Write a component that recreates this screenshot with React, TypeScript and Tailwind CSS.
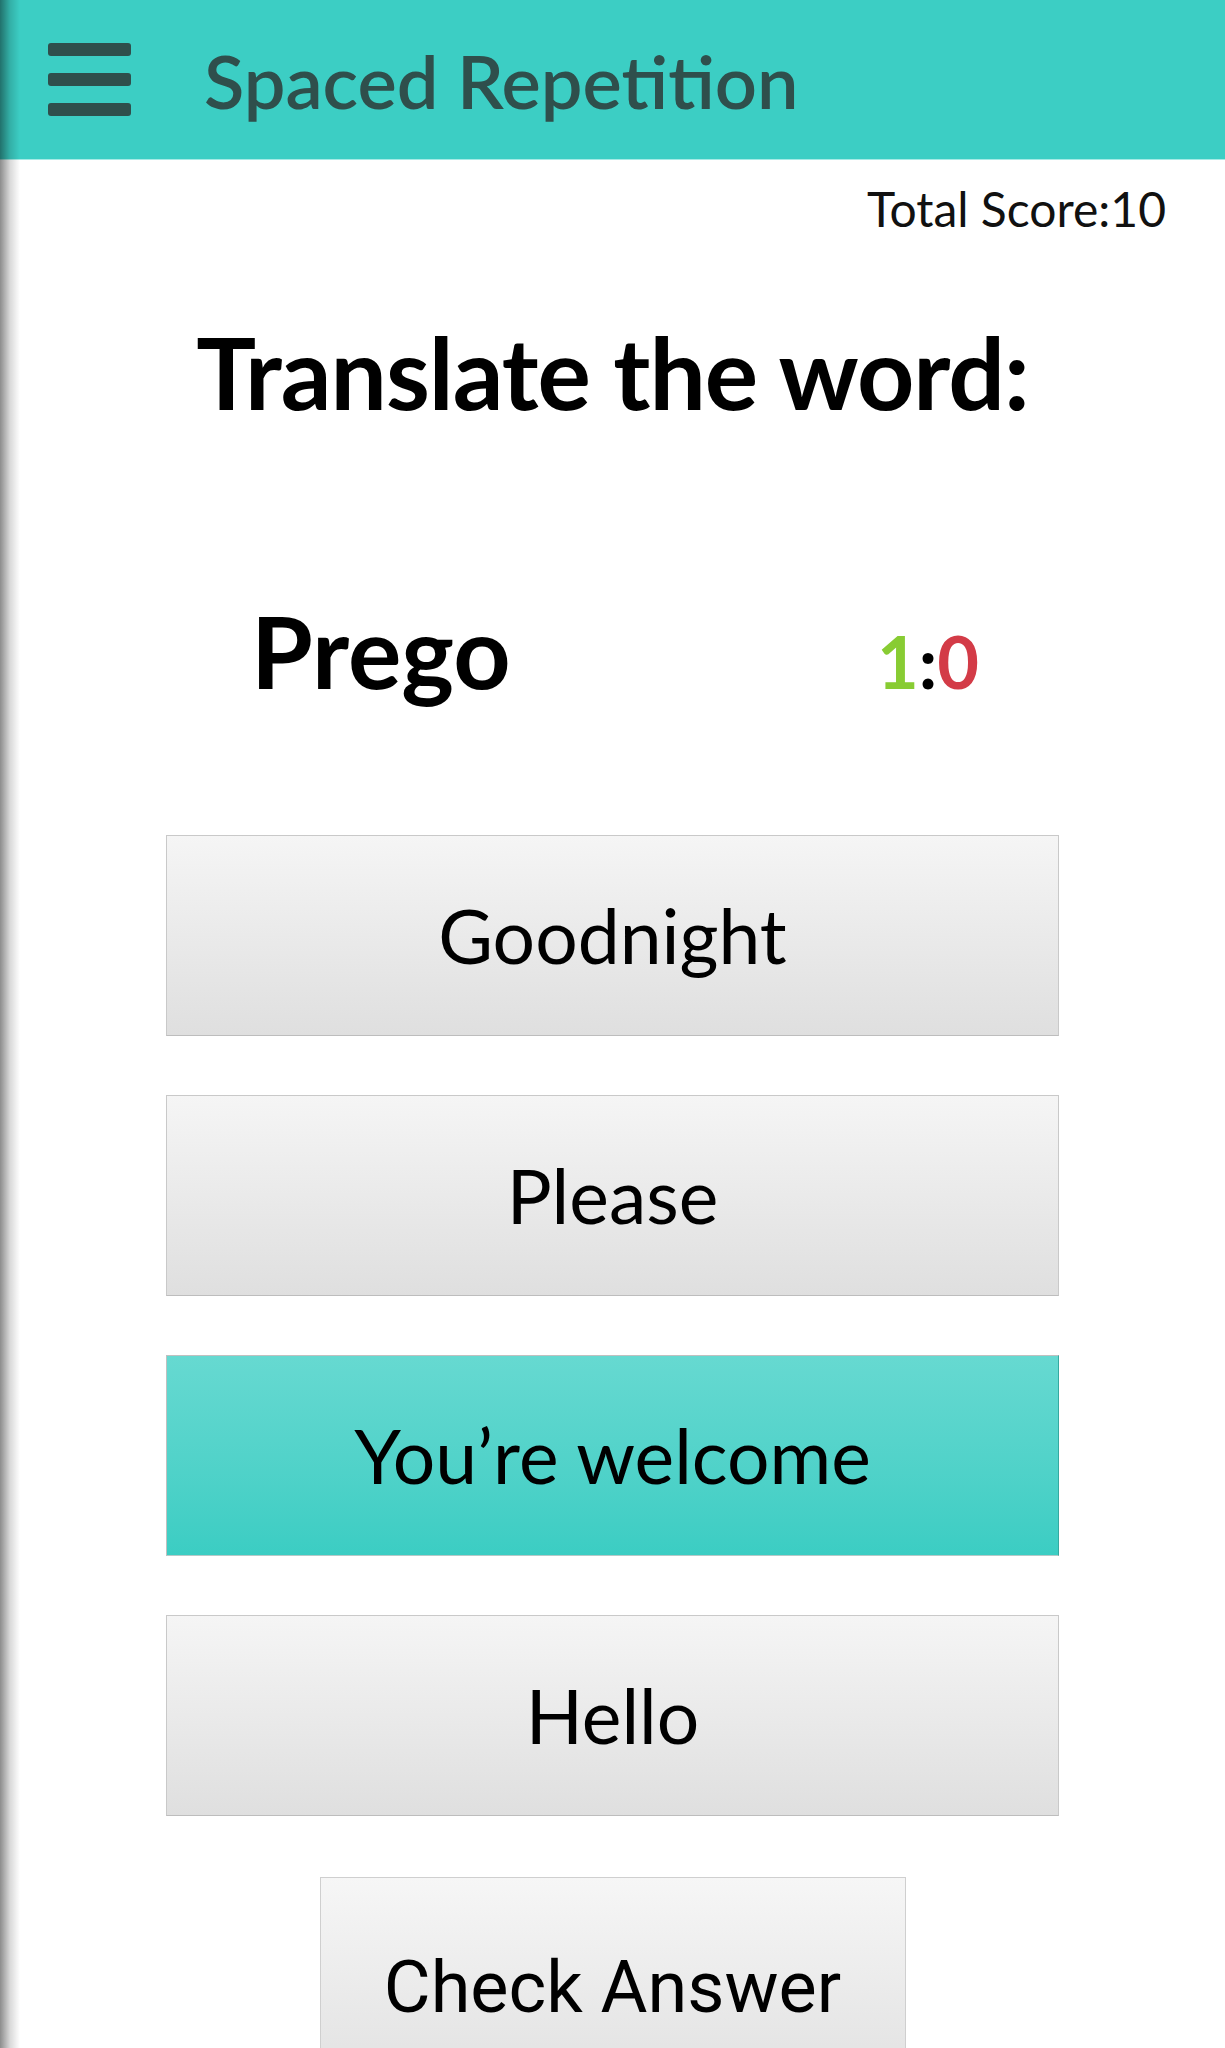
import React from "react";

const choices = [
  { label: "Goodnight", selected: false },
  { label: "Please", selected: false },
  { label: "You’re welcome", selected: true },
  { label: "Hello", selected: false },
];

export default function App() {
  return (
    <div className="relative h-[2048px] w-full overflow-hidden bg-white font-['Lato',sans-serif] text-[#111]">
      {/* drawer edge shadow */}
      <div className="pointer-events-none absolute inset-y-0 left-0 z-10 w-[20px] bg-gradient-to-r from-black/45 via-black/15 to-transparent" />

      <header className="flex h-[160px] items-center border-b border-[#a6ebe6] bg-[#3ccec4] pl-[48px]">
        <div className="flex w-[83px] flex-col gap-[17px]">
          <span className="h-[13px] rounded-[3px] bg-[#2f4f4c]" />
          <span className="h-[13px] rounded-[3px] bg-[#2f4f4c]" />
          <span className="h-[13px] rounded-[3px] bg-[#2f4f4c]" />
        </div>
        <h1 className="ml-[73px] mt-[2px] text-[74px] font-semibold text-[#2f4f4c]">
          Spaced Repetition
        </h1>
      </header>

      <div className="flex justify-end pr-[59px] pt-[25px]">
        <span className="text-[48px] font-normal leading-none">Total Score:10</span>
      </div>

      <h2 className="mt-[88px] text-center text-[100px] font-bold leading-none tracking-[-1px] text-black">
        Translate the word:
      </h2>

      <div className="mt-[179px] flex items-baseline justify-between pl-[251px] pr-[246px]">
        <span className="text-[100px] font-bold leading-none text-black">Prego</span>
        <span className="mb-[6px] text-[72px] font-bold leading-none">
          <span className="text-[#88cc33]">1</span>
          <span className="text-black">:</span>
          <span className="text-[#d33b47]">0</span>
        </span>
      </div>

      <div className="mx-[166px] mt-[132px] flex flex-col gap-[59px]">
        {choices.map((c) => (
          <button
            key={c.label}
            className={
              c.selected
                ? "flex h-[201px] items-center justify-center border border-[#c0c0c0] border-r-[#35a9a0] border-b-[#b5c9c7] bg-gradient-to-b from-[#66d9d1] to-[#3bcdc3] text-[75px] font-normal text-black"
                : "flex h-[201px] items-center justify-center border border-[#c9c9c9] border-b-[#bdbdbd] bg-gradient-to-b from-[#f5f5f5] to-[#dfdfdf] text-[75px] font-normal text-black"
            }
          >
            {c.label}
          </button>
        ))}
      </div>

      <div className="mt-[61px] flex justify-center">
        <button className="flex h-[221px] w-[586px] items-center justify-center border border-[#cfcfcf] bg-gradient-to-b from-[#f6f6f6] to-[#e0e0e0] font-['Roboto',sans-serif] text-[72px] text-black">
          Check Answer
        </button>
      </div>
    </div>
  );
}
